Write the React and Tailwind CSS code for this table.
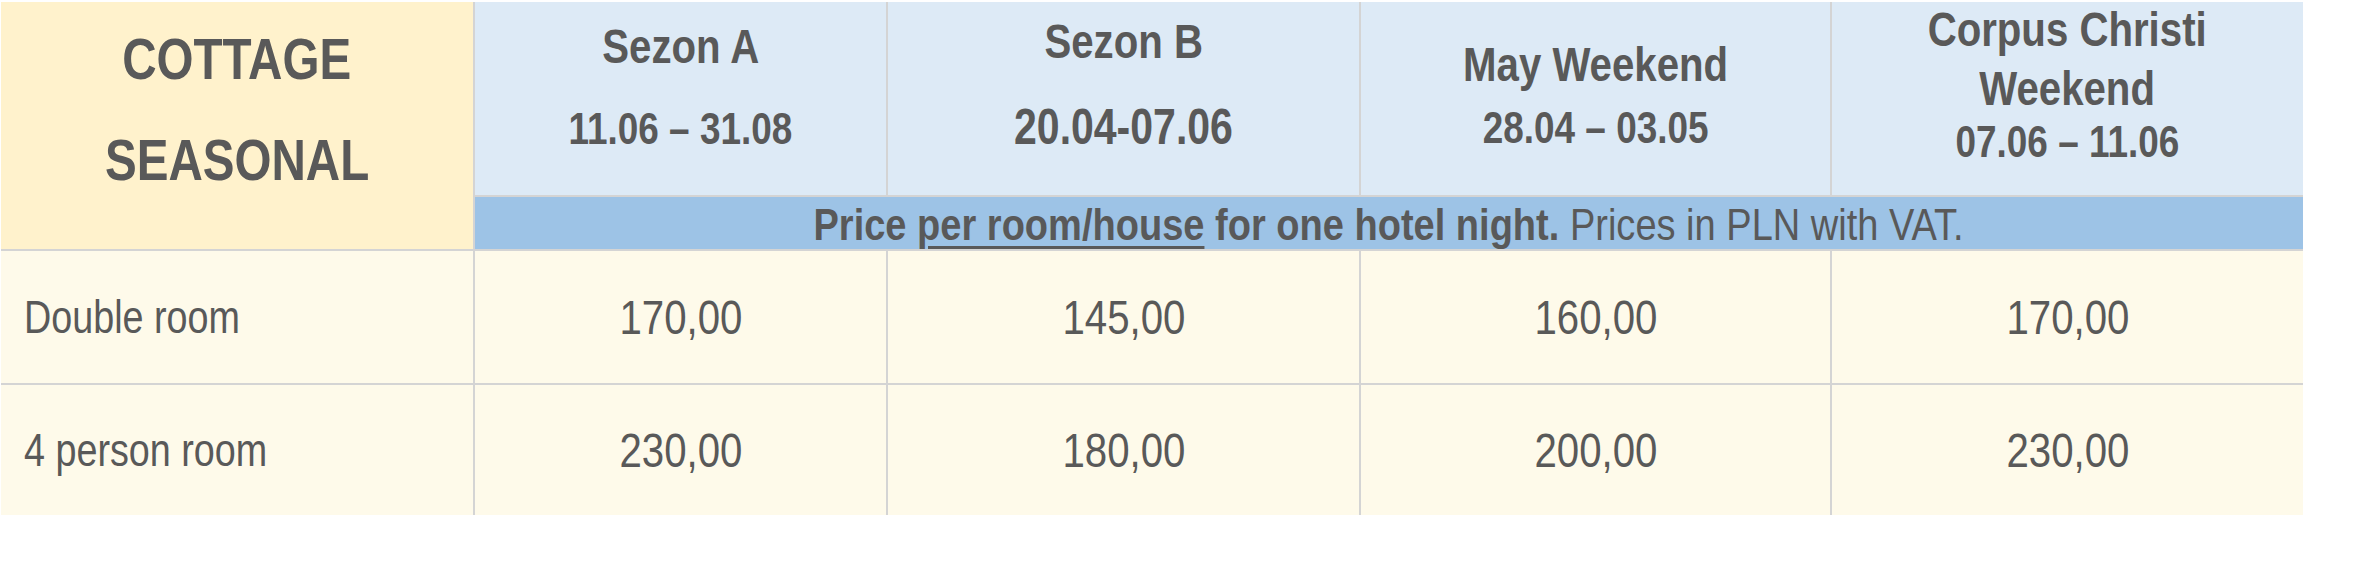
import React from "react";

const FONT = { fontFamily: "'Liberation Sans', Arial, sans-serif" };

const rows = [
  { label: "Double room", values: ["170,00", "145,00", "160,00", "170,00"] },
  { label: "4 person room", values: ["230,00", "180,00", "200,00", "230,00"] },
];

function N({ children, left }) {
  return (
    <span className={left ? "inline-block whitespace-nowrap scale-x-[0.82] origin-left" : "inline-block whitespace-nowrap scale-x-[0.82] origin-center"}>
      {children}
    </span>
  );
}

export default function App() {
  return (
    <div className="w-[2362px] h-[581px] bg-white pt-[2px] pl-[1px]" style={FONT}>
      <div className="grid grid-cols-[472px_411px_471px_469px_471px] grid-rows-[193px_52px_132px_130px] gap-[2px] bg-[#d4d4d4] w-[2302px] text-[#595959]">
        {/* Left header spanning two rows */}
        <div className="row-span-2 bg-[#fff2cc] flex flex-col items-center pt-[28px] font-bold text-[58px] leading-none">
          <N>COTTAGE</N>
          <div className="mt-[43px]"><N>SEASONAL</N></div>
        </div>

        {/* Sezon A */}
        <div className="bg-[#ddeaf6] flex flex-col items-center pt-[20px] font-bold leading-none">
          <div className="text-[49px]"><N>Sezon A</N></div>
          <div className="text-[45px] mt-[35px]"><N>11.06 – 31.08</N></div>
        </div>

        {/* Sezon B */}
        <div className="bg-[#ddeaf6] flex flex-col items-center pt-[15px] font-bold leading-none">
          <div className="text-[49px]"><N>Sezon B</N></div>
          <div className="text-[50px] mt-[36px]"><N>20.04-07.06</N></div>
        </div>

        {/* May Weekend */}
        <div className="bg-[#ddeaf6] flex flex-col items-center pt-[38px] font-bold leading-none">
          <div className="text-[49px]"><N>May Weekend</N></div>
          <div className="text-[45px] mt-[16px]"><N>28.04 – 03.05</N></div>
        </div>

        {/* Corpus Christi */}
        <div className="bg-[#ddeaf6] flex flex-col items-center pt-[3px] font-bold leading-none text-center">
          <div className="text-[49px]"><N>Corpus Christi</N></div>
          <div className="text-[49px] mt-[10px]"><N>Weekend</N></div>
          <div className="text-[45px] mt-[6px]"><N>07.06 – 11.06</N></div>
        </div>

        {/* Band */}
        <div className="col-span-4 bg-[#9dc3e6] flex justify-center pt-[5px] text-[45px] leading-none">
          <span className="inline-block whitespace-nowrap scale-x-[0.845] origin-center">
            <span className="font-bold">
              Price{" "}
              <span className="underline decoration-[3px] underline-offset-[6px]">per room/house</span>{" "}
              for one hotel night.
            </span>{" "}
            Prices in PLN with VAT.
          </span>
        </div>

        {rows.map((r) => (
          <React.Fragment key={r.label}>
            <div className="bg-[#fefaea] flex items-center pl-[23px] text-[46px] leading-none">
              <N left>{r.label}</N>
            </div>
            {r.values.map((v, i) => (
              <div key={i} className="bg-[#fefaea] flex items-center justify-center text-[49px] leading-none">
                <N>{v}</N>
              </div>
            ))}
          </React.Fragment>
        ))}
      </div>
    </div>
  );
}
